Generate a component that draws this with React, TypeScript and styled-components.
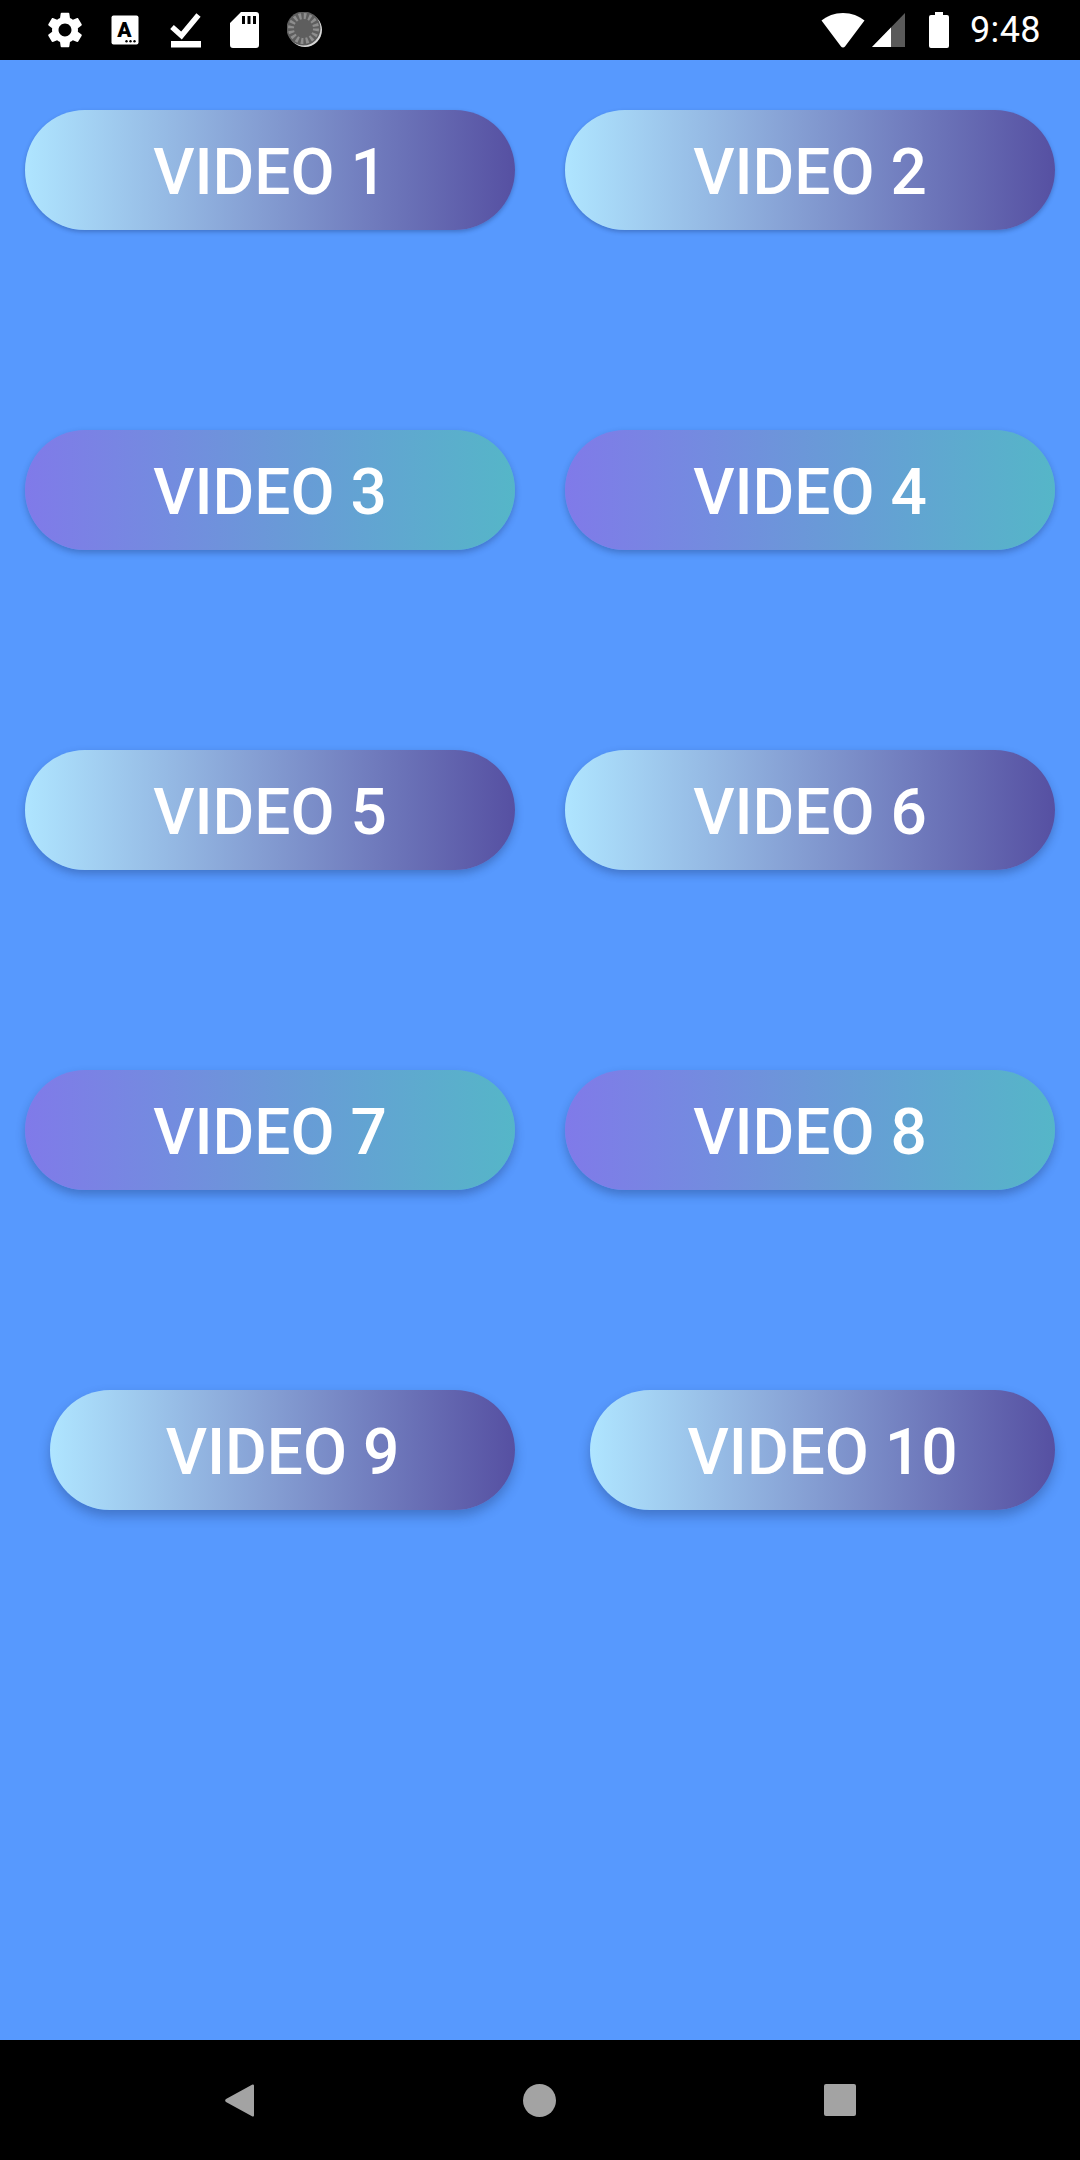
import React from "react";
import styled, { createGlobalStyle } from "styled-components";

const Global = createGlobalStyle`
  html, body { margin: 0; padding: 0; background: #5799fe; }
  * { box-sizing: border-box; }
`;

const Screen = styled.div`
  width: 1080px;
  height: 2160px;
  display: flex;
  flex-direction: column;
  background: #5799fe;
  font-family: Roboto, "Liberation Sans", sans-serif;
  overflow: hidden;
`;

const StatusBar = styled.header`
  height: 60px;
  flex: none;
  background: #000;
  display: flex;
  align-items: center;
  justify-content: space-between;
  padding: 0 39px 0 47px;
`;

const IconGroup = styled.div`
  display: flex;
  align-items: center;
`;

const StatusIcon = styled.svg<{ $gap?: number }>`
  display: block;
  flex: none;
  margin-right: ${(p) => p.$gap ?? 0}px;
`;

const Clock = styled.span`
  color: #fff;
  font-size: 36px;
  font-weight: 400;
  line-height: 60px;
  margin-left: 21px;
  letter-spacing: 0.4px;
`;

const Content = styled.main`
  flex: 1;
  display: grid;
  grid-template-columns: 490px 490px;
  grid-auto-rows: 120px;
  column-gap: 50px;
  row-gap: 200px;
  padding: 50px 25px 0;
  align-content: start;
`;

const gradients = {
  light: "linear-gradient(90deg, #afe5ff 0%, #5650a2 100%)",
  teal: "linear-gradient(90deg, #807ae9 0%, #55b6c8 100%)",
};

const VideoButton = styled.button<{ $tone: "light" | "teal"; $inset?: boolean; $depth: number }>`
  height: 120px;
  border: 0;
  border-radius: 60px;
  margin-left: ${(p) => (p.$inset ? 25 : 0)}px;
  padding: 5px 0 0;
  background: ${(p) => gradients[p.$tone]};
  box-shadow: 0 ${(p) => p.$depth}px ${(p) => p.$depth * 2}px rgba(20, 40, 90, 0.32);
  color: #fff;
  font-family: Roboto, "Liberation Sans", sans-serif;
  font-size: 64px;
  font-weight: 500;
  letter-spacing: 0;
  text-align: center;
`;

const NavBar = styled.nav`
  height: 120px;
  flex: none;
  background: #000;
  display: flex;
  align-items: center;
  justify-content: center;
  gap: 268px;
`;

const NavIcon = styled.svg`
  display: block;
  flex: none;
`;

const videos = [1, 2, 3, 4, 5, 6, 7, 8, 9, 10];

export default function App() {
  return (
    <Screen>
      <Global />
      <StatusBar>
        <IconGroup>
          <StatusIcon width="36" height="36" viewBox="2.4 2 19.2 20" $gap={28} fill="#fff">
            <path d="M19.14 12.94c.04-.3.06-.61.06-.94 0-.32-.02-.64-.07-.94l2.03-1.58c.18-.14.23-.41.12-.61l-1.92-3.32c-.12-.22-.37-.29-.59-.22l-2.39.96c-.5-.38-1.03-.7-1.62-.94l-.36-2.54c-.04-.24-.24-.41-.48-.41h-3.84c-.24 0-.43.17-.47.41l-.36 2.54c-.59.24-1.13.57-1.62.94l-2.39-.96c-.22-.08-.47 0-.59.22L2.74 8.87c-.12.21-.08.47.12.61l2.03 1.58c-.05.3-.09.63-.09.94s.02.64.07.94l-2.03 1.58c-.18.14-.23.41-.12.61l1.92 3.32c.12.22.37.29.59.22l2.39-.96c.5.38 1.03.7 1.62.94l.36 2.54c.05.24.24.41.48.41h3.84c.24 0 .44-.17.47-.41l.36-2.54c.59-.24 1.13-.56 1.62-.94l2.39.96c.22.08.47 0 .59-.22l1.92-3.32c.12-.22.07-.47-.12-.61l-2.01-1.58zM12 15.6c-1.98 0-3.6-1.62-3.6-3.6s1.62-3.6 3.6-3.6 3.6 1.62 3.6 3.6-1.62 3.6-3.6 3.6z" />
          </StatusIcon>
          <StatusIcon width="28" height="30" viewBox="0 0 28 30" $gap={31}>
            <rect x="0.5" y="0.5" width="27" height="29" rx="2" fill="#fff" />
            <text x="13.5" y="22" fontFamily="Roboto, sans-serif" fontWeight="900" fontSize="21" textAnchor="middle" fill="#000">A</text>
            <circle cx="15.5" cy="26.3" r="1.2" fill="#000" />
            <circle cx="19.5" cy="26.3" r="1.2" fill="#000" />
            <circle cx="23.5" cy="26.3" r="1.2" fill="#000" />
          </StatusIcon>
          <StatusIcon width="32" height="36" viewBox="0 0 32 36" $gap={28}>
            <path d="M2 15l9.5 8.5L28.5 3" fill="none" stroke="#fff" strokeWidth="5.5" />
            <rect x="1" y="29" width="30" height="6.5" fill="#fff" />
          </StatusIcon>
          <StatusIcon width="29" height="36" viewBox="0 0 29 36" $gap={28} fill="#fff">
            <path d="M11 0h15a3 3 0 0 1 3 3v30a3 3 0 0 1-3 3H3a3 3 0 0 1-3-3V11zM12 4v8h3V4zM17.5 4v8h3V4zM23 4v8h3V4z" fillRule="evenodd" />
          </StatusIcon>
          <StatusIcon width="36" height="36" viewBox="0 0 36 36">
            <circle cx="18" cy="18" r="17" fill="#d8d8d8" />
            <circle cx="16.5" cy="16.5" r="17" fill="#5e5e5e" />
            <circle cx="16.5" cy="16.5" r="12.5" fill="none" stroke="#8e8e8e" strokeWidth="6" strokeDasharray="2.5 2.4" />
          </StatusIcon>
        </IconGroup>
        <IconGroup>
          <StatusIcon width="44" height="35" viewBox="0 0 44 35" $gap={7} fill="#fff">
            <path d="M22 0C13.5 0 6 3 .5 7.5L20 33.5a2.6 2.6 0 0 0 4 0L43.5 7.5C38 3 30.5 0 22 0z" />
          </StatusIcon>
          <StatusIcon width="33" height="34" viewBox="0 0 33 34" $gap={24}>
            <path d="M33 0v34H0z" fill="#5a5a5a" />
            <path d="M19 14.5V34H0z" fill="#fff" />
          </StatusIcon>
          <StatusIcon width="20" height="36" viewBox="0 0 20 36" fill="#fff">
            <path d="M6 0h8v3h4a2 2 0 0 1 2 2v29a2 2 0 0 1-2 2H2a2 2 0 0 1-2-2V5a2 2 0 0 1 2-2h4z" />
          </StatusIcon>
          <Clock>9:48</Clock>
        </IconGroup>
      </StatusBar>
      <Content>
        {videos.map((n) => {
          const row = Math.floor((n - 1) / 2);
          return (
            <VideoButton key={n} $tone={row % 2 === 0 ? "light" : "teal"} $inset={row === 4} $depth={2 + row}>
              VIDEO {n}
            </VideoButton>
          );
        })}
      </Content>
      <NavBar>
        <NavIcon width="30" height="33" viewBox="0 0 30 33" fill="#a3a3a3">
          <path d="M29 1.5a1.2 1.2 0 0 0-2-.8L1 15a2 2 0 0 0 0 3l26 14.3a1.2 1.2 0 0 0 2-.8z" />
        </NavIcon>
        <NavIcon width="33" height="33" viewBox="0 0 33 33" fill="#a3a3a3">
          <circle cx="16.5" cy="16.5" r="16.5" />
        </NavIcon>
        <NavIcon width="32" height="32" viewBox="0 0 32 32" fill="#a3a3a3">
          <rect width="32" height="32" rx="2" />
        </NavIcon>
      </NavBar>
    </Screen>
  );
}
